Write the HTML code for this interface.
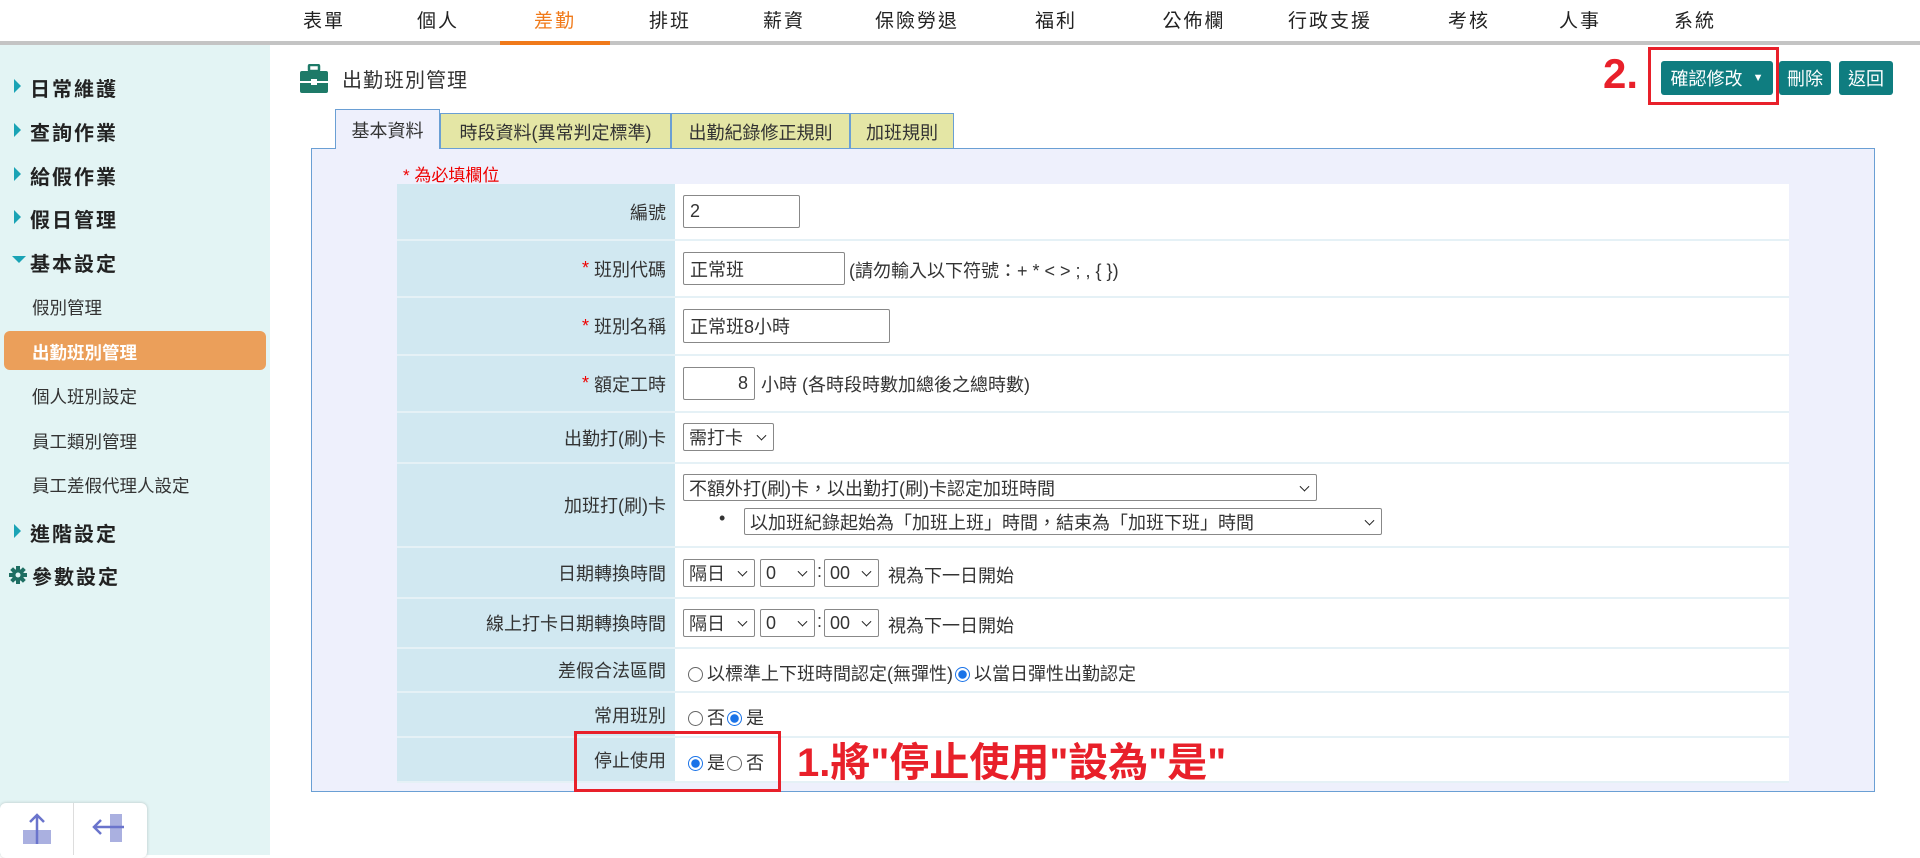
<!DOCTYPE html>
<html><head><meta charset="utf-8"><style>
*{box-sizing:border-box;margin:0;padding:0}
body{width:1920px;height:855px;position:relative;overflow:hidden;background:#fff;font-family:"Liberation Sans","Noto Sans CJK TC",sans-serif;color:#333;font-size:18px}
.a{position:absolute;white-space:nowrap}
.nav{font-size:19px;color:#222;top:6px;letter-spacing:2px;width:120px;text-align:center;margin-left:-60px}
.side{font-size:20px;font-weight:bold;color:#222;left:30px;letter-spacing:2px}
.tri{position:absolute;left:-16px;top:6px;width:0;height:0;border-top:7px solid transparent;border-bottom:7px solid transparent;border-left:7px solid #1aa3b5}
.sub{font-size:17.5px;color:#333;left:32px}
.lab{position:absolute;left:397px;width:278px;background:#d1e8f1;text-align:right;padding-right:9px;font-size:18px;color:#333;display:flex;align-items:center;justify-content:flex-end}
.sep{position:absolute;left:397px;width:1392px;height:2px;background:#e5f1f6}
.inp{position:absolute;border:1px solid #888;background:#fff;font-size:18px;padding-left:6px;display:flex;align-items:center;border-radius:2px}
.sel{position:absolute;border:1px solid #888;background:#fff;font-size:18px;padding-left:5px;display:flex;align-items:center;border-radius:2px}
.sel:after{content:"";position:absolute;right:8px;top:50%;width:6px;height:6px;border-right:1.5px solid #222;border-bottom:1.5px solid #222;transform:translateY(-70%) rotate(45deg)}
.r{color:#e00}
.rad{display:inline-block;width:15px;height:15px;border:1px solid #666;border-radius:50%;vertical-align:-2px;margin:0 4px 0 2px}
.rad.on{border:1.5px solid #1a73e8;background:radial-gradient(circle,#1a73e8 0 4px,#fff 4.5px)}
.tab{position:absolute;top:113px;height:36px;background:#e4e6a5;border:1px solid #6a9fd4;border-bottom:none;font-size:18px;display:flex;align-items:center;justify-content:center;color:#333}
.btn{position:absolute;background:#0f7d80;color:#fff;font-size:18px;border-radius:3px;display:flex;align-items:center;justify-content:center}
</style></head><body>
<div class="a nav" style="left:324px">表單</div>
<div class="a nav" style="left:438px">個人</div>
<div class="a nav" style="left:555px;color:#f07a1a">差勤</div>
<div class="a nav" style="left:670px">排班</div>
<div class="a nav" style="left:784px">薪資</div>
<div class="a nav" style="left:917px">保險勞退</div>
<div class="a nav" style="left:1056px">福利</div>
<div class="a nav" style="left:1194px">公佈欄</div>
<div class="a nav" style="left:1330px">行政支援</div>
<div class="a nav" style="left:1469px">考核</div>
<div class="a nav" style="left:1580px">人事</div>
<div class="a nav" style="left:1695px">系統</div>
<div class="a" style="left:0;top:41px;width:1920px;height:4px;background:#c4c4c4"></div>
<div class="a" style="left:500px;top:41px;width:110px;height:4px;background:#f07a1a"></div>
<div class="a" style="left:0;top:45px;width:270px;height:810px;background:#e3f4f4"></div>
<div class="a side" style="top:73px"><span class="tri"></span>日常維護</div>
<div class="a side" style="top:117px"><span class="tri"></span>查詢作業</div>
<div class="a side" style="top:161px"><span class="tri"></span>給假作業</div>
<div class="a side" style="top:204px"><span class="tri"></span>假日管理</div>
<div class="a side" style="top:248px"><span class="tri" style="left:-18px;top:8px;border-left:7px solid transparent;border-right:7px solid transparent;border-top:7px solid #1aa3b5;border-bottom:none"></span>基本設定</div>
<div class="a sub" style="top:295px">假別管理</div>
<div class="a" style="left:4px;top:331px;width:262px;height:39px;background:#eb9f5a;border-radius:6px"></div>
<div class="a sub" style="top:340px;color:#fff;font-weight:bold">出勤班別管理</div>
<div class="a sub" style="top:384px">個人班別設定</div>
<div class="a sub" style="top:429px">員工類別管理</div>
<div class="a sub" style="top:473px">員工差假代理人設定</div>
<div class="a side" style="top:518px"><span class="tri"></span>進階設定</div>
<div class="a side" style="top:561px;left:32px">參數設定</div>
<svg class="a" style="left:8px;top:565px" width="20" height="20" viewBox="0 0 20 20"><g fill="#1e6e62"><circle cx="10" cy="10" r="6"/><rect x="8" y="1" width="4" height="18"/><rect x="1" y="8" width="18" height="4"/><rect x="8" y="1" width="4" height="18" transform="rotate(45 10 10)"/><rect x="8" y="1" width="4" height="18" transform="rotate(-45 10 10)"/></g><circle cx="10" cy="10" r="2.5" fill="#e3f4f4"/></svg>
<div class="a" style="left:0;top:803px;width:147px;height:55px;background:#fff;border-radius:6px;box-shadow:0 0 3px rgba(0,0,0,.2)"></div>
<div class="a" style="left:73px;top:803px;width:1px;height:52px;background:#ddd"></div>
<svg class="a" style="left:20px;top:810px" width="34" height="45"><rect x="3" y="20" width="28" height="14" fill="#aab0e0"/><path d="M17 34V5M10 12l7-7 7 7" stroke="#6a74cc" stroke-width="2.5" fill="none"/></svg>
<svg class="a" style="left:90px;top:810px" width="40" height="45"><rect x="20" y="4" width="12" height="28" fill="#aab0e0"/><path d="M4 17h30M11 10l-7 7 7 7" stroke="#6a74cc" stroke-width="2.5" fill="none"/></svg>
<svg class="a" style="left:300px;top:64px" width="28" height="30" viewBox="0 0 28 30"><rect x="9" y="1" width="10" height="6" rx="1" fill="none" stroke="#1e7a68" stroke-width="2.5"/><rect x="0" y="7" width="28" height="22" rx="2" fill="#1e7a68"/><rect x="0" y="17" width="28" height="2" fill="#fff"/><rect x="11" y="15" width="6" height="6" fill="#fff"/></svg>
<div class="a" style="left:342px;top:64px;font-size:20px;color:#333;letter-spacing:1px">出勤班別管理</div>
<div class="a" style="left:1603px;top:50px;font-size:42px;font-weight:bold;color:#e8202a">2.</div>
<div class="a" style="left:1648px;top:47px;width:131px;height:58px;border:3px solid #e8202a"></div>
<div class="btn" style="left:1661px;top:61px;width:112px;height:34px">確認修改&nbsp;&nbsp;<span style="font-size:11px">▼</span></div>
<div class="btn" style="left:1779px;top:61px;width:52px;height:34px">刪除</div>
<div class="btn" style="left:1839px;top:61px;width:54px;height:34px">返回</div>
<div class="tab" style="left:335px;top:109px;height:40px;width:105px;background:#eef0fc">基本資料</div>
<div class="tab" style="left:440px;width:231px">時段資料(異常判定標準)</div>
<div class="tab" style="left:671px;width:179px">出勤紀錄修正規則</div>
<div class="tab" style="left:850px;width:104px">加班規則</div>
<div class="a" style="left:311px;top:148px;width:1564px;height:644px;background:#eef0fc;border:1px solid #6a9fd4"></div>
<div class="a" style="left:336px;top:147px;width:103px;height:3px;background:#eef0fc"></div>
<div class="a r" style="left:403px;top:161px;font-size:17px">* 為必填欄位</div>
<div class="a" style="left:397px;top:184px;width:1392px;height:598px;background:#fff"></div>
<div class="lab" style="top:184px;height:56px">編號</div>
<div class="lab" style="top:240px;height:57px"><span class="r">*</span>&nbsp;班別代碼</div>
<div class="lab" style="top:297px;height:58px"><span class="r">*</span>&nbsp;班別名稱</div>
<div class="lab" style="top:355px;height:57px"><span class="r">*</span>&nbsp;額定工時</div>
<div class="lab" style="top:412px;height:51px">出勤打(刷)卡</div>
<div class="lab" style="top:463px;height:84px">加班打(刷)卡</div>
<div class="lab" style="top:547px;height:51px">日期轉換時間</div>
<div class="lab" style="top:598px;height:50px">線上打卡日期轉換時間</div>
<div class="lab" style="top:648px;height:44px">差假合法區間</div>
<div class="lab" style="top:692px;height:45px">常用班別</div>
<div class="lab" style="top:737px;height:45px">停止使用</div>
<div class="sep" style="top:239px"></div><div class="sep" style="top:296px"></div><div class="sep" style="top:354px"></div><div class="sep" style="top:411px"></div><div class="sep" style="top:462px"></div><div class="sep" style="top:546px"></div><div class="sep" style="top:597px"></div><div class="sep" style="top:647px"></div><div class="sep" style="top:691px"></div><div class="sep" style="top:736px"></div><div class="sep" style="top:781px"></div>
<div class="inp" style="left:683px;top:195px;width:117px;height:33px">2</div>
<div class="inp" style="left:683px;top:252px;width:162px;height:33px">正常班</div>
<div class="a" style="left:849px;top:257px">(請勿輸入以下符號：+ * &lt; &gt; ; , { })</div>
<div class="inp" style="left:683px;top:309px;width:207px;height:34px">正常班8小時</div>
<div class="inp" style="left:683px;top:367px;width:72px;height:33px;justify-content:flex-end;padding-right:6px">8</div>
<div class="a" style="left:761px;top:371px">小時 (各時段時數加總後之總時數)</div>
<div class="sel" style="left:683px;top:423px;width:91px;height:28px">需打卡</div>
<div class="sel" style="left:683px;top:474px;width:634px;height:27px">不額外打(刷)卡，以出勤打(刷)卡認定加班時間</div>
<div class="a" style="left:719px;top:508px;font-size:18px">•</div>
<div class="sel" style="left:744px;top:508px;width:638px;height:27px">以加班紀錄起始為「加班上班」時間，結束為「加班下班」時間</div>
<div class="sel" style="left:683px;top:559px;width:72px;height:28px">隔日</div>
<div class="sel" style="left:760px;top:559px;width:55px;height:28px">0</div>
<div class="a" style="left:817px;top:561px">:</div>
<div class="sel" style="left:824px;top:559px;width:55px;height:28px">00</div>
<div class="a" style="left:888px;top:562px">視為下一日開始</div>
<div class="sel" style="left:683px;top:609px;width:72px;height:28px">隔日</div>
<div class="sel" style="left:760px;top:609px;width:55px;height:28px">0</div>
<div class="a" style="left:817px;top:611px">:</div>
<div class="sel" style="left:824px;top:609px;width:55px;height:28px">00</div>
<div class="a" style="left:888px;top:612px">視為下一日開始</div>
<div class="a" style="left:686px;top:660px"><span class="rad"></span>以標準上下班時間認定(無彈性)<span class="rad on"></span>以當日彈性出勤認定</div>
<div class="a" style="left:686px;top:704px"><span class="rad"></span>否<span class="rad on"></span>是</div>
<div class="a" style="left:686px;top:749px"><span class="rad on"></span>是<span class="rad"></span>否</div>
<div class="a" style="left:574px;top:731px;width:207px;height:61px;border:3px solid #e8202a"></div>
<div class="a" style="left:797px;top:730px;font-size:40px;font-weight:bold;color:#e8202a">1.將"停止使用"設為"是"</div>
</body></html>
